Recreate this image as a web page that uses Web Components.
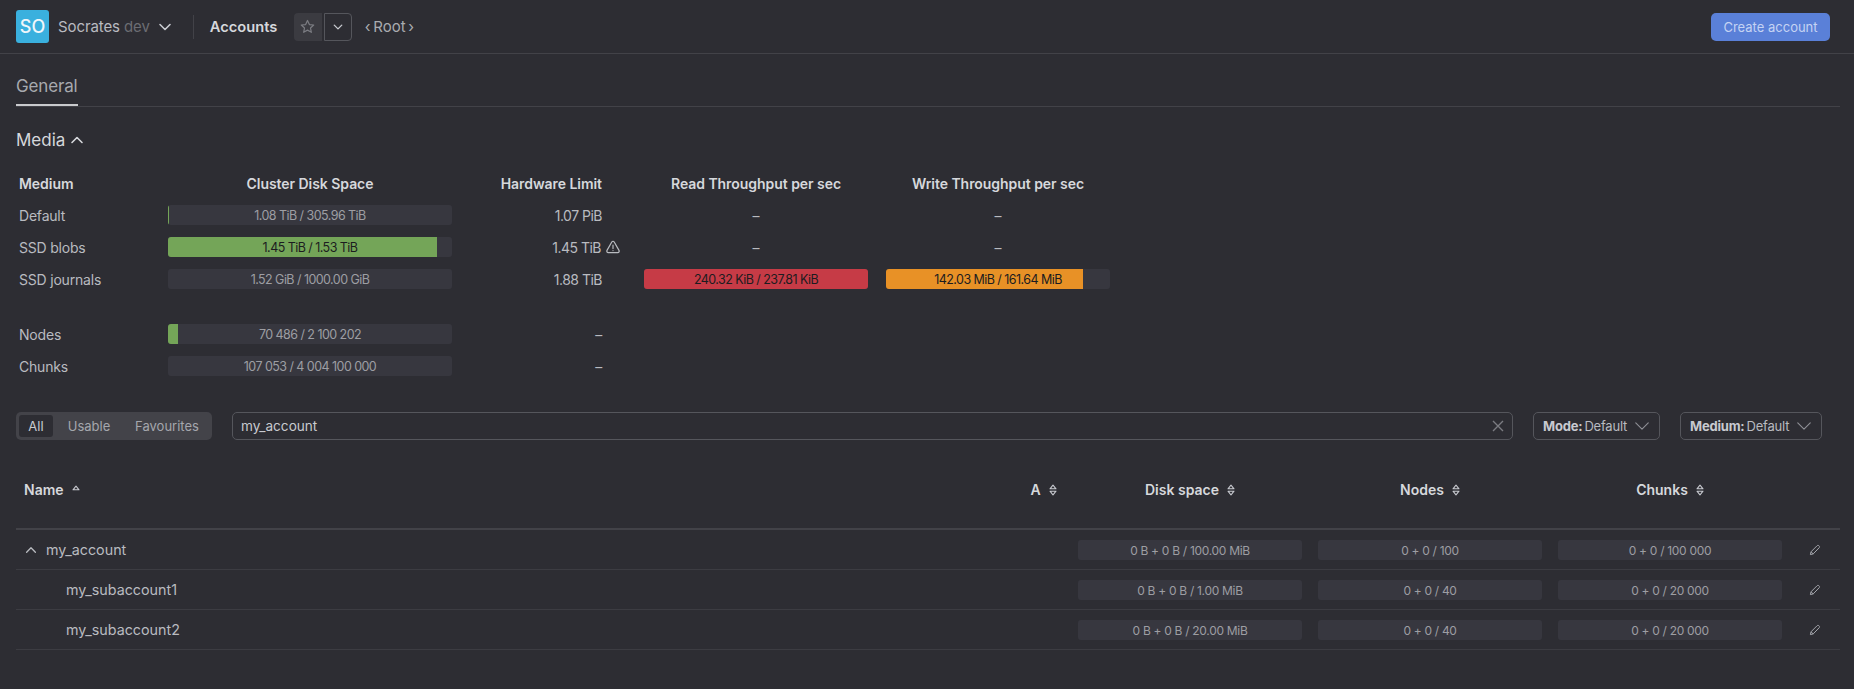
<!DOCTYPE html>
<html lang="en">
<head>
<meta charset="utf-8">
<title>Accounts</title>
<style>
  html, body { margin: 0; background: #2d2d33; }
  body { font-family: Inter, "Liberation Sans", sans-serif; color: #c8cad0; font-size: 14px; height: 689px; overflow: hidden; }
  main { display: block; padding: 0 14px 0 16px; }
</style>
</head>
<body>
<app-header></app-header>
<main>
  <tab-bar label="General"></tab-bar>
  <media-section></media-section>
  <filter-bar></filter-bar>
  <accounts-table></accounts-table>
</main>

<script>
const CHEVRON_DOWN = (size, color, sw = 1.5) => `<svg width="${size}" height="${size}" viewBox="0 0 16 16" fill="none" stroke="${color}" stroke-width="${sw}" stroke-linecap="round" stroke-linejoin="round"><path d="M3 5.5 8 10.5 13 5.5"/></svg>`;
const CHEVRON_UP = (size, color, sw = 1.5) => `<svg width="${size}" height="${size}" viewBox="0 0 16 16" fill="none" stroke="${color}" stroke-width="${sw}" stroke-linecap="round" stroke-linejoin="round"><path d="M3 10.5 8 5.5 13 10.5"/></svg>`;

class ProgressBar extends HTMLElement {
  constructor() {
    super();
    this.attachShadow({ mode: "open" });
  }

  connectedCallback() {
    const fill = this.getAttribute("fill") || "0";
    const color = this.getAttribute("color") || "#74a558";
    const dark = parseFloat(fill) > 50;
    this.shadowRoot.innerHTML = `
      <style>
        :host { display: block; height: 20px; }
        .bar { position: relative; height: 100%; background: #37373f; border-radius: 3px; overflow: hidden; }
        .fill { position: absolute; left: 0; top: 0; bottom: 0; width: ${fill}; background: ${color}; }
        .text {
          position: relative; text-align: center; line-height: 21px;
          font-size: var(--bar-font, 12.5px); letter-spacing: var(--bar-spacing, -0.55px);
          color: ${dark ? "#1c1c20" : "#9d9ea3"};
        }
      </style>
      <div class="bar"><div class="fill"></div><div class="text"><slot></slot></div></div>
    `;
  }
}

class SortIcon extends HTMLElement {
  constructor() {
    super();
    this.attachShadow({ mode: "open" });
  }

  connectedCallback() {
    const up = this.hasAttribute("up");
    this.shadowRoot.innerHTML = `
      <style>:host { display: inline-flex; margin-left: 8px; } svg { display: block; }</style>
      <svg width="8" height="12" viewBox="0 0 8 12" fill="none" stroke="#c8cad0" stroke-width="1.1" stroke-linejoin="round" style="${up ? "transform: translateY(1px)" : ""}">
        <path d="M1 4.8C2 3.6 3 2.2 4 1.2 5 2.2 6 3.6 7 4.8Z"/>
        ${up ? "" : '<path d="M1 7.2C2 8.4 3 9.8 4 10.8 5 9.8 6 8.4 7 7.2Z"/>'}
      </svg>
    `;
  }
}

class AppHeader extends HTMLElement {
  constructor() {
    super();
    this.attachShadow({ mode: "open" });
  }

  connectedCallback() {
    this.shadowRoot.innerHTML = `
      <style>
        :host { display: flex; align-items: center; height: 53px; padding: 0 16px; border-bottom: 1px solid #424248; box-sizing: content-box; }
        .logo { width: 33px; height: 33px; border-radius: 3px; background: #3ab0de; color: #f0f6fa; font-size: 18px; font-weight: 500; display: flex; align-items: center; justify-content: center; }
        .cluster { margin-left: 9px; color: #b9bbc0; font-size: 15px; letter-spacing: -0.1px; }
        .cluster span { color: #6b6c72; }
        .chev { display: flex; margin-left: 7px; }
        .divider { width: 1px; height: 24px; background: #424248; margin: 0 16px 0 20px; }
        .page { font-weight: 600; font-size: 14.7px; color: #d6d8dc; width: 84px; }
        .star { width: 28px; height: 28px; background: #3b3b41; border-radius: 4px 0 0 4px; display: flex; align-items: center; justify-content: center; }
        .more { width: 26px; height: 26px; margin-left: 2px; border: 1px solid #55565c; border-radius: 0 4px 4px 0; display: flex; align-items: center; justify-content: center; }
        .root { margin-left: 13px; color: #a9abb0; font-size: 15px; }
        .create { margin-left: auto; margin-right: 8px; height: 28px; width: 119px; background: #5a80d8; border-radius: 5px; color: #c5d3f3; font-size: 13px; display: flex; align-items: center; justify-content: center; }
      </style>
      <div class="logo">SO</div>
      <div class="cluster">Socrates <span>dev</span></div>
      <div class="chev">${CHEVRON_DOWN(16, "#c8cad0", 1.6)}</div>
      <div class="divider"></div>
      <div class="page">Accounts</div>
      <div class="star">
        <svg width="15" height="15" viewBox="0 0 16 16" fill="none" stroke="#7b7c82" stroke-width="1.3" stroke-linejoin="round"><path d="M8 1.6 10 5.9 14.6 6.4 11.2 9.6 12.1 14.2 8 11.9 3.9 14.2 4.8 9.6 1.4 6.4 6 5.9Z"/></svg>
      </div>
      <div class="more">${CHEVRON_DOWN(12, "#c8cad0", 1.8)}</div>
      <div class="root">&#8249;&#8201;Root&#8201;&#8250;</div>
      <div class="create">Create account</div>
    `;
  }
}

class TabBar extends HTMLElement {
  constructor() {
    super();
    this.attachShadow({ mode: "open" });
  }

  connectedCallback() {
    this.shadowRoot.innerHTML = `
      <style>
        :host { display: block; height: 52px; border-bottom: 1px solid #424248; }
        .tab { display: inline-block; box-sizing: border-box; height: 52px; padding-top: 21px; line-height: 22px; font-size: 17px; color: #a7a9ae; border-bottom: 2px solid #c9cacd; letter-spacing: -0.15px; }
      </style>
      <div class="tab">${this.getAttribute("label")}</div>
    `;
  }
}

class MediaSection extends HTMLElement {
  constructor() {
    super();
    this.attachShadow({ mode: "open" });
  }

  connectedCallback() {
    this.shadowRoot.innerHTML = `
      <style>
        :host { display: block; }
        h2 { margin: 22px 0 0; font-size: 17px; font-weight: 400; line-height: 22px; color: #d6d8dc; display: flex; align-items: center; gap: 4px; }
        .grid {
          display: grid; margin-top: 16px;
          grid-template-columns: 152px 284px 150px 42px 224px 18px 224px;
          grid-template-rows: 32px 32px 32px 32px 23px 32px 32px; align-items: center;
          font-size: 14px; letter-spacing: -0.2px; color: #b9bbc0;
        }
        .h { font-weight: 600; color: #d6d8dc; letter-spacing: -0.05px; }
        .c { text-align: center; }
        .r { text-align: right; }
        .v { letter-spacing: -0.5px; }
        .first { padding-left: 3px; }
        .warn { display: flex; justify-content: flex-end; align-items: center; }
        .warn svg { margin-left: 4px; margin-right: -19px; }
        .spacer { grid-column: 1 / -1; height: 23px; }
      </style>
      <h2>Media ${CHEVRON_UP(16, "#d6d8dc", 1.6)}</h2>
      <div class="grid">
        <div class="h first">Medium</div><div class="h c">Cluster Disk Space</div><div class="h r">Hardware Limit</div><div></div><div class="h c">Read Throughput per sec</div><div></div><div class="h c">Write Throughput per sec</div>

        <div class="first">Default</div><progress-bar fill="1px">1.08 TiB / 305.96 TiB</progress-bar><div class="r v">1.07 PiB</div><div></div><div class="c">&ndash;</div><div></div><div class="c">&ndash;</div>

        <div class="first">SSD blobs</div><progress-bar fill="94.8%">1.45 TiB / 1.53 TiB</progress-bar>
        <div class="warn v">1.45 TiB<svg width="16" height="16" viewBox="0 0 16 16" fill="none" stroke="#b9bbc0" stroke-width="1.2" stroke-linejoin="round" stroke-linecap="round"><path d="M6.8 3C7.4 2 8.6 2 9.2 3L14 11.4C14.6 12.5 13.9 13.6 12.8 13.6H3.2C2.1 13.6 1.4 12.5 2 11.4Z"/><path d="M8 6.2V9.6M8 11.5V11.6"/></svg></div>
        <div></div><div class="c">&ndash;</div><div></div><div class="c">&ndash;</div>

        <div class="first">SSD journals</div><progress-bar fill="0">1.52 GiB / 1000.00 GiB</progress-bar><div class="r v">1.88 TiB</div><div></div><progress-bar fill="100%" color="#c63b46">240.32 KiB / 237.81 KiB</progress-bar><div></div><progress-bar fill="88%" color="#e89126">142.03 MiB / 161.64 MiB</progress-bar>

        <div class="spacer"></div>

        <div class="first">Nodes</div><progress-bar fill="3.4%">70 486 / 2 100 202</progress-bar><div class="r">&ndash;</div><div></div><div></div><div></div><div></div>

        <div class="first">Chunks</div><progress-bar fill="0">107 053 / 4 004 100 000</progress-bar><div class="r">&ndash;</div><div></div><div></div><div></div><div></div>
      </div>
    `;
  }
}

class FilterBar extends HTMLElement {
  constructor() {
    super();
    this.attachShadow({ mode: "open" });
  }

  connectedCallback() {
    this.shadowRoot.innerHTML = `
      <style>
        :host { display: flex; margin-top: 30px; height: 28px; font-size: 13px; color: #b9bbc0; width: 1806px; }
        .seg { width: 196px; box-sizing: border-box; background: #434349; border-radius: 5px; padding: 3px; display: flex; align-items: stretch; }
        .seg div { display: flex; align-items: center; justify-content: center; color: #a5a7ad; }
        .seg .on { width: 34px; background: #2d2d33; border-radius: 3px; color: #c8cad0; }
        .seg .u { width: 72px; }
        .seg .f { width: 84px; }
        .search { flex: 1; margin-left: 20px; box-sizing: border-box; border: 1px solid #55565c; border-radius: 5px; padding: 0 8px; display: flex; align-items: center; justify-content: space-between; color: #c8cad0; font-size: 13.6px; }
        .sel { box-sizing: border-box; border: 1px solid #55565c; border-radius: 5px; padding: 0 7px 0 9px; display: flex; align-items: center; justify-content: space-between; margin-left: 20px; letter-spacing: -0.2px; }
        .sel b { font-weight: 700; margin-right: 2px; color: #c8cad0; }
        .mode { width: 127px; }
        .medium { width: 142px; }
      </style>
      <div class="seg"><div class="on">All</div><div class="u">Usable</div><div class="f">Favourites</div></div>
      <div class="search"><span>my_account</span>
        <svg width="12" height="12" viewBox="0 0 12 12" stroke="#7b7c82" stroke-width="1.4" fill="none"><path d="M1 1 11 11M11 1 1 11"/></svg>
      </div>
      <div class="sel mode"><span><b>Mode:</b>Default</span>${CHEVRON_DOWN(20, "#8f9096", 0.9)}</div>
      <div class="sel medium"><span><b>Medium:</b>Default</span>${CHEVRON_DOWN(20, "#8f9096", 0.9)}</div>
    `;
  }
}

class AccountRow extends HTMLElement {
  constructor() {
    super();
    this.attachShadow({ mode: "open" });
  }

  connectedCallback() {
    const isChild = this.hasAttribute("child");
    this.shadowRoot.innerHTML = `
      <style>
        :host { display: grid; grid-template-columns: 994px 60px 240px 240px 240px 50px; height: 39px; border-bottom: 1px solid #3c3c42; align-items: center; box-sizing: content-box; --bar-font: 12px; --bar-spacing: -0.3px; }
        .name { display: flex; align-items: center; font-size: 14.3px; color: #b9bbc0; padding-left: ${isChild ? "50px" : "8px"}; }
        .name svg { margin-right: 8px; }
        .cell { padding: 0 8px; }
        .edit { display: flex; justify-content: center; }
      </style>
      <div class="name">${isChild ? "" : CHEVRON_UP(14, "#b9bbc0", 1.5)}${this.getAttribute("name")}</div>
      <div></div>
      <div class="cell"><progress-bar fill="0">${this.getAttribute("disk")}</progress-bar></div>
      <div class="cell"><progress-bar fill="0">${this.getAttribute("nodes")}</progress-bar></div>
      <div class="cell"><progress-bar fill="0">${this.getAttribute("chunks")}</progress-bar></div>
      <div class="edit">
        <svg width="12" height="12" viewBox="0 0 12 12" fill="none" stroke="#a5a7ad" stroke-width="1" stroke-linejoin="round"><path d="M1.4 10.6 2 7.8 8 1.8C8.6 1.2 9.4 1.2 10 1.8 10.7 2.4 10.7 3.2 10.1 3.8L4.2 9.9Z"/><path d="M2 7.8 4.2 9.9"/></svg>
      </div>
    `;
  }
}

class AccountsTable extends HTMLElement {
  constructor() {
    super();
    this.attachShadow({ mode: "open" });
  }

  connectedCallback() {
    this.shadowRoot.innerHTML = `
      <style>
        :host { display: block; margin-top: 30px; width: 1824px; }
        .head { display: grid; grid-template-columns: 994px 60px 240px 240px 240px 50px; height: 58px; border-bottom: 2px solid #424248; line-height: 40px; font-size: 14px; font-weight: 600; color: #d6d8dc; box-sizing: content-box; }
        .head div { display: flex; align-items: center; justify-content: center; height: 40px; }
        .head .n { justify-content: flex-start; padding-left: 8px; }
        .head .a { padding-left: 7px; }
      </style>
      <div class="head">
        <div class="n">Name<sort-icon up></sort-icon></div>
        <div class="a">A<sort-icon></sort-icon></div>
        <div>Disk space<sort-icon></sort-icon></div>
        <div>Nodes<sort-icon></sort-icon></div>
        <div>Chunks<sort-icon></sort-icon></div>
        <div></div>
      </div>
      <account-row name="my_account" disk="0 B + 0 B / 100.00 MiB" nodes="0 + 0 / 100" chunks="0 + 0 / 100 000"></account-row>
      <account-row child name="my_subaccount1" disk="0 B + 0 B / 1.00 MiB" nodes="0 + 0 / 40" chunks="0 + 0 / 20 000"></account-row>
      <account-row child name="my_subaccount2" disk="0 B + 0 B / 20.00 MiB" nodes="0 + 0 / 40" chunks="0 + 0 / 20 000"></account-row>
    `;
  }
}

customElements.define("progress-bar", ProgressBar);
customElements.define("sort-icon", SortIcon);
customElements.define("app-header", AppHeader);
customElements.define("tab-bar", TabBar);
customElements.define("media-section", MediaSection);
customElements.define("filter-bar", FilterBar);
customElements.define("account-row", AccountRow);
customElements.define("accounts-table", AccountsTable);
</script>
</body>
</html>
